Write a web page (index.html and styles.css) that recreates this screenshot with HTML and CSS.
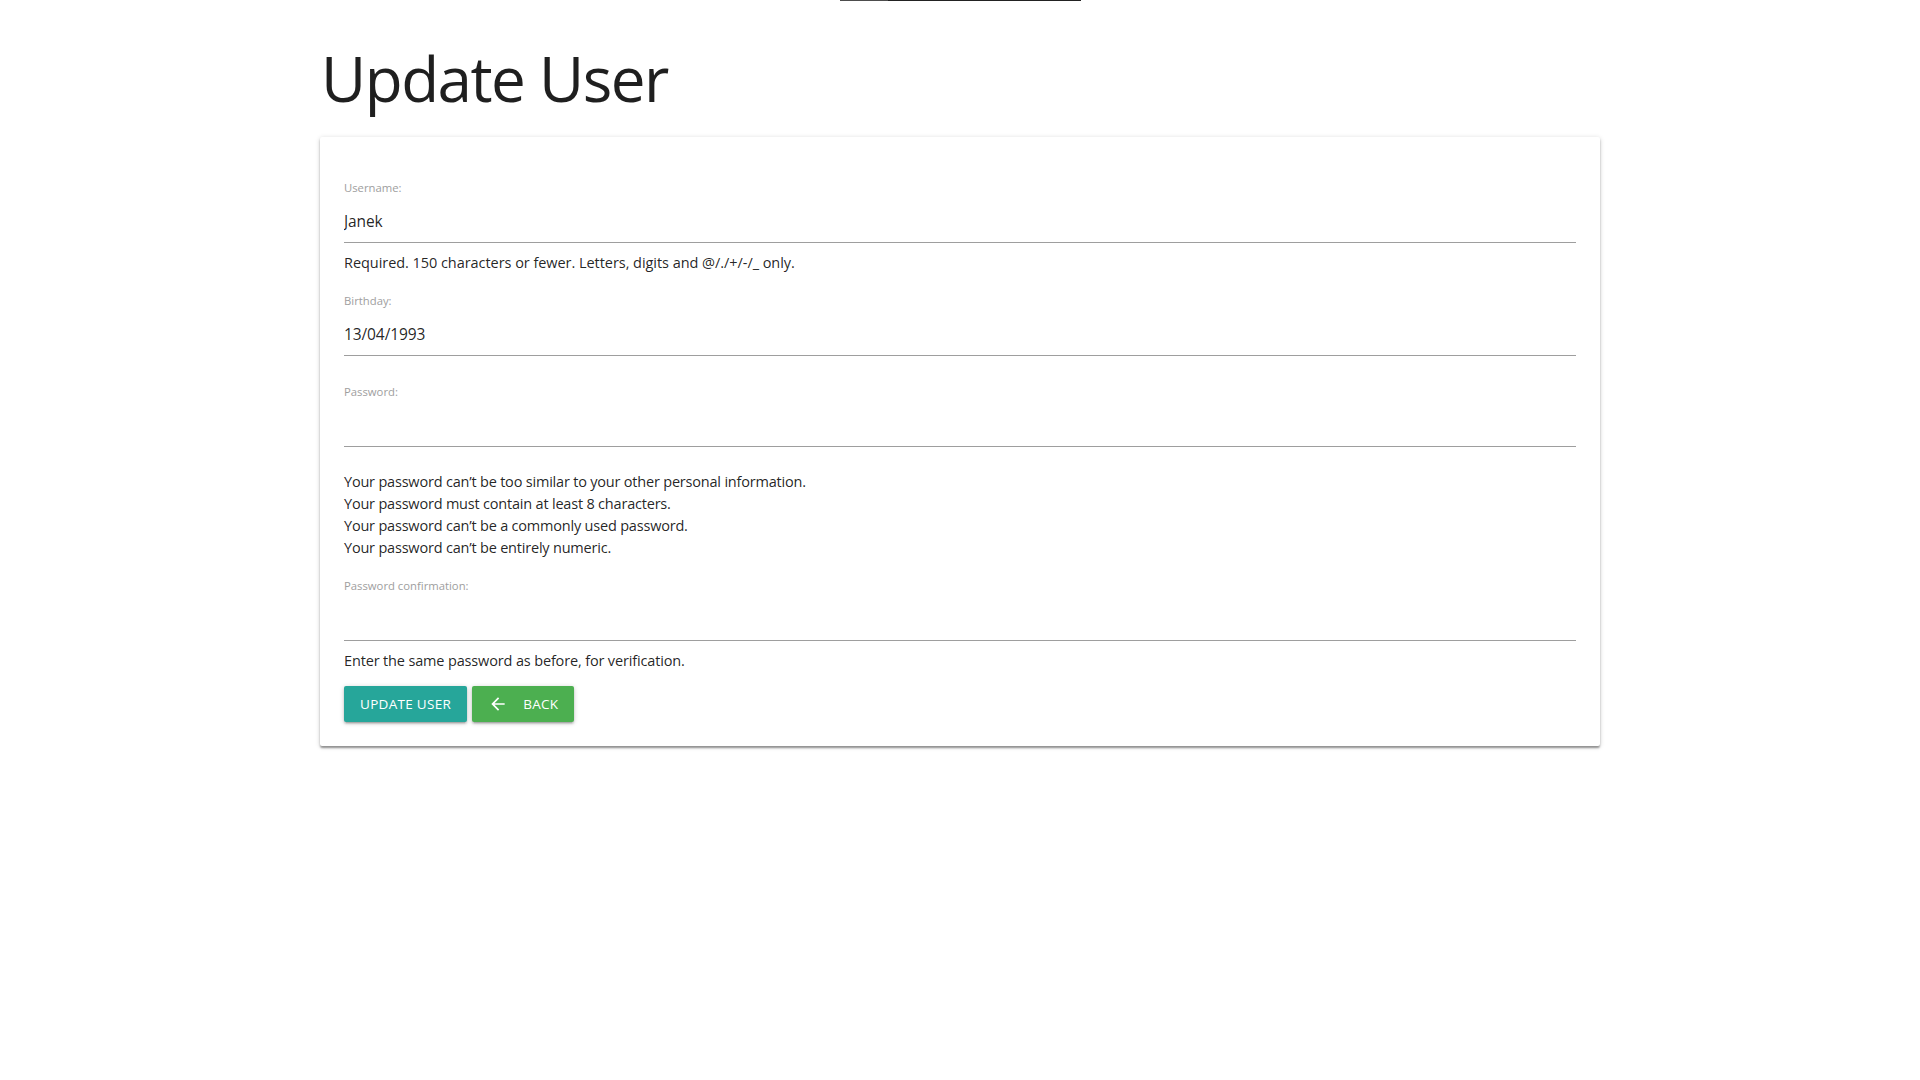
FILE: index.html
```html
<!DOCTYPE html>
<html lang="en">
<head>
<meta charset="utf-8">
<title>Update User</title>
<link rel="stylesheet" href="styles.css">
</head>
<body>
<div class="topbar"><span class="topbar-seg topbar-seg--light"></span><span class="topbar-seg topbar-seg--dark"></span></div>
<main class="container">
  <h1 class="page-title">Update User</h1>
  <div class="card">
    <form class="card-content">
      <div class="field">
        <label class="field-label" for="id_username">Username:</label>
        <input class="field-input" id="id_username" type="text" value="Janek">
        <p class="helper helper--wide">Required. 150 characters or fewer. Letters, digits and @/./+/-/_ only.</p>
      </div>
      <div class="field field--gap">
        <label class="field-label" for="id_birthday">Birthday:</label>
        <input class="field-input" id="id_birthday" type="text" value="13/04/1993">
      </div>
      <div class="field field--gap-lg">
        <label class="field-label" for="id_password1">Password:</label>
        <input class="field-input" id="id_password1" type="password">
        <ul class="helper-list">
          <li>Your password can’t be too similar to your other personal information.</li>
          <li>Your password must contain at least 8 characters.</li>
          <li>Your password can’t be a commonly used password.</li>
          <li>Your password can’t be entirely numeric.</li>
        </ul>
      </div>
      <div class="field field--gap-sm">
        <label class="field-label" for="id_password2">Password confirmation:</label>
        <input class="field-input" id="id_password2" type="password">
        <p class="helper">Enter the same password as before, for verification.</p>
      </div>
      <div class="actions">
        <button class="btn btn--teal" type="button">Update User</button>
        <button class="btn btn--green" type="button">
          <svg class="btn-icon" viewBox="0 0 24 24" aria-hidden="true"><path d="M20 11H7.83l5.59-5.59L12 4l-8 8 8 8 1.41-1.41L7.83 13H20v-2z"/></svg>
          <span>Back</span>
        </button>
      </div>
    </form>
  </div>
</main>
</body>
</html>
```
FILE: styles.css
```css
* { box-sizing: border-box; }

html, body {
  margin: 0;
  padding: 0;
  background: #ffffff;
}

body {
  font-family: "Open Sans", "Noto Sans", sans-serif;
  color: rgba(0, 0, 0, 0.87);
}

.topbar {
  display: flex;
  justify-content: center;
  height: 1px;
}

.topbar-seg { display: block; height: 1px; }
.topbar-seg--light { width: 48px; background: #4d4d4d; }
.topbar-seg--dark { width: 193px; background: #222222; }

.container {
  width: 1280px;
  margin: 0 auto 40px auto;
}

.page-title {
  margin: 42px 0 24px 1px;
  font-size: 62px;
  line-height: 70px;
  font-weight: 400;
  letter-spacing: -1.5px;
  color: #1f1f1f;
}

.card {
  background: #fff;
  border-radius: 2px;
  box-shadow: 0 2px 2px 0 rgba(0,0,0,0.26), 0 3px 2px -1px rgba(0,0,0,0.14), 0 1px 5px 0 rgba(0,0,0,0.18);
}

.card-content {
  display: flex;
  flex-direction: column;
  padding: 43px 24px 24px 24px;
  margin: 0;
}

.field { display: flex; flex-direction: column; }
.field--gap { margin-top: 19px; }
.field--gap-lg { margin-top: 28px; }
.field--gap-sm { margin-top: 19px; }

.field-label {
  font-size: 11.3px;
  line-height: 16px;
  color: #9e9e9e;
}

.field-input {
  display: block;
  width: 100%;
  height: 47px;
  padding: 4px 0 0 0;
  margin: 0;
  border: none;
  border-bottom: 1px solid #9e9e9e;
  border-radius: 0;
  outline: none;
  background: transparent;
  font-family: inherit;
  font-size: 15.5px;
  letter-spacing: -0.1px;
  color: rgba(0, 0, 0, 0.87);
}

.helper {
  margin: 9px 0 0 0;
  font-size: 14.5px;
  letter-spacing: -0.15px;
  line-height: 22px;
}

.helper--wide { letter-spacing: -0.05px; }

.helper-list {
  list-style: none;
  margin: 24px 0 0 0;
  padding: 0;
  font-size: 14.5px;
  letter-spacing: -0.2px;
  line-height: 22px;
}

.actions {
  display: flex;
  gap: 5px;
  margin-top: 14px;
}

.btn {
  display: inline-flex;
  align-items: center;
  height: 36px;
  padding: 0 16px;
  border: none;
  border-radius: 2px;
  font-family: inherit;
  font-size: 13.5px;
  letter-spacing: 0.3px;
  text-transform: uppercase;
  color: #fff;
  box-shadow: 0 2px 2px 0 rgba(0,0,0,0.14), 0 3px 1px -2px rgba(0,0,0,0.12), 0 1px 5px 0 rgba(0,0,0,0.2);
  cursor: pointer;
}

.btn--teal { background: #26a69a; }
.btn--green { background: #4caf50; }

.btn-icon {
  width: 20px;
  height: 20px;
  margin-right: 15px;
  fill: #fff;
}
```
